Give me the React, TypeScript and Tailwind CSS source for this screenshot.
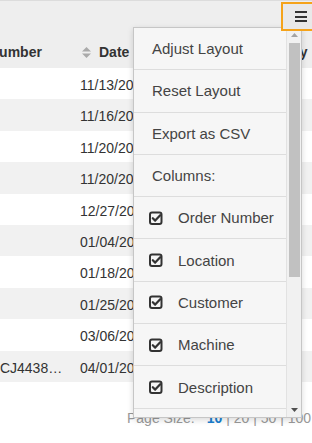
import React from "react";

const dates = [
  "11/13/2019",
  "11/16/2019",
  "11/20/2019",
  "11/20/2019",
  "12/27/2019",
  "01/04/2020",
  "01/18/2020",
  "01/25/2020",
  "03/06/2020",
  "04/01/2020",
];

const orders = ["10452", "10467", "10481", "10482", "10533", "10541", "10566", "10572", "10601", "PO-201-CJ4438201"];

function SortIcon() {
  return (
    <svg width="9" height="11" viewBox="0 0 9 11" className="shrink-0">
      <path d="M4.5 0 L9 4.5 H0 Z" fill="#aaaaaa" />
      <path d="M4.5 11 L9 6.5 H0 Z" fill="#aaaaaa" />
    </svg>
  );
}

function CheckIcon() {
  return (
    <svg width="14" height="14" viewBox="0 0 14 14" className="shrink-0">
      <rect x="1" y="1.5" width="11.5" height="11.5" rx="2" fill="none" stroke="#333" strokeWidth="2" />
      <path d="M3.8 7.2 L6.2 9.6 L11.2 4.2" fill="none" stroke="#333" strokeWidth="2.2" strokeLinecap="round" strokeLinejoin="round" />
    </svg>
  );
}

export default function App() {
  const textItems = ["Adjust Layout", "Reset Layout", "Export as CSV", "Columns:"];
  const checkItems = ["Order Number", "Location", "Customer", "Machine", "Description", "Status"];
  return (
    <div className="relative w-[312px] h-[443px] overflow-hidden bg-white font-['Liberation_Sans',Arial,sans-serif] text-[14px] leading-[16px] text-[#333]">
      {/* toolbar */}
      <div className="h-[30px] bg-[#eeeeee] border-t border-[#dcdcdc] flex justify-start overflow-visible">
        <div className="relative z-20 ml-[281px] mt-[1px] w-[34px] h-[29px] shrink-0 border-2 border-[#f5a31a] bg-[#e9e9e9] flex flex-col justify-center gap-[2.5px] pl-[12px]">
          <span className="block w-[12px] h-[2px] bg-[#333]" />
          <span className="block w-[12px] h-[2px] bg-[#333]" />
          <span className="block w-[12px] h-[2px] bg-[#333]" />
        </div>
      </div>

      {/* table */}
      <div className="overflow-hidden">
        <div className="ml-[-61px] w-[600px]">
          <div className="flex h-[38px] bg-[#eeeeee] font-bold">
            <div className="w-[133px] shrink-0 px-[8px] pt-[14px] whitespace-nowrap overflow-hidden">Order Number</div>
            <div className="w-[171px] shrink-0 pl-[10px] pt-[14px] flex items-start gap-[8px]">
              <div className="pt-[3px]">
                <SortIcon />
              </div>
              <span>Date</span>
            </div>
            <div className="w-[150px] shrink-0 pl-[10px] pt-[14px] whitespace-nowrap">Delivery</div>
          </div>
          {dates.map((d, i) => (
            <div key={i} className={`flex h-[31.4px] ${i % 2 === 1 ? "bg-[#f1f1f1]" : "bg-white"}`}>
              <div className="w-[133px] shrink-0 px-[8px] pt-[9px] whitespace-nowrap overflow-hidden text-ellipsis">{orders[i]}</div>
              <div className="w-[171px] shrink-0 pl-[8px] pt-[9px] whitespace-nowrap">{d}</div>
              <div className="w-[150px] shrink-0" />
            </div>
          ))}
        </div>
      </div>

      {/* footer */}
      <div className="pt-[28px] pl-[127px] whitespace-nowrap text-[#999]">
        <span>Page Size:</span>
        <span className="ml-[12px] font-bold text-[#1a7fcf]">10</span>
        <span> | 20 | 50 | 100</span>
      </div>

      {/* dropdown menu */}
      <div className="absolute z-10 left-[133px] top-[27px] w-[169px] h-[391px] border border-[#c6c6c6] bg-[#f6f6f6] shadow-[0_2px_6px_rgba(0,0,0,0.15)] flex text-[15px] leading-[17px] text-[#444]">
        <div className="flex-1 overflow-hidden">
          {textItems.map((t) => (
            <div key={t} className="h-[42.3px] border-b border-[#dddddd] flex items-center pl-[18px]">
              {t}
            </div>
          ))}
          {checkItems.map((t) => (
            <div key={t} className="h-[42.3px] border-b border-[#dddddd] flex items-center pl-[15px]">
              <CheckIcon />
              <span className="ml-[15px]">{t}</span>
            </div>
          ))}
        </div>
        <div className="w-[15px] shrink-0 bg-[#f1f1f1] border-l border-[#e2e2e2] flex flex-col items-center">
          <div className="h-[14px] w-full flex items-center justify-center">
            <svg width="7" height="4" viewBox="0 0 7 4">
              <path d="M3.5 0 L7 4 H0 Z" fill="#a3a3a3" />
            </svg>
          </div>
          <div className="mt-[1px] w-[11px] h-[234px] bg-[#c1c1c1]" />
          <div className="flex-1" />
          <div className="h-[14px] w-full flex items-center justify-center">
            <svg width="7" height="4" viewBox="0 0 7 4">
              <path d="M0 0 H7 L3.5 4 Z" fill="#505050" />
            </svg>
          </div>
        </div>
      </div>
    </div>
  );
}
